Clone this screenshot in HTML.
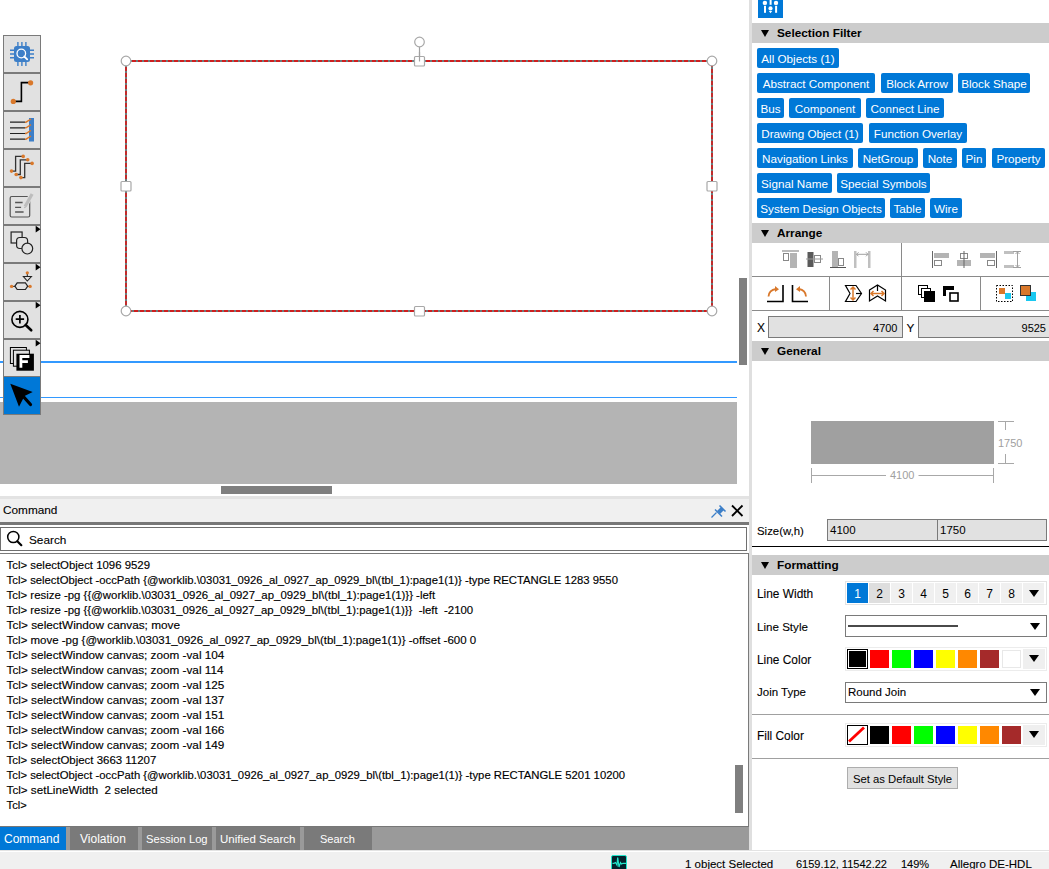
<!DOCTYPE html>
<html><head><meta charset="utf-8">
<style>
*{margin:0;padding:0;box-sizing:border-box}
html,body{width:1049px;height:869px;overflow:hidden;background:#fff;font-family:"Liberation Sans",sans-serif;color:#000}
.a{position:absolute}
#canvas{left:0;top:0;width:737px;height:402px;background:#fff}
#cgrey{left:0;top:402px;width:737px;height:82px;background:#b4b4b4}
#hsb{left:0;top:484px;width:737px;height:12px;background:#fff}
#hthumb{left:221px;top:486px;width:111px;height:8px;background:#7f7f7f}
#vsb{left:737px;top:0;width:12px;height:496px;background:#fff}
#vthumb{left:739px;top:278px;width:8px;height:87px;background:#7f7f7f}
#split{left:749px;top:0;width:3px;height:851px;background:#dfdfdf}
.tb{left:3px;width:38px;height:38px;background:#e1e1e1;border:1px solid #7a7a7a}
.tb svg{position:absolute;left:0;top:0}
.log{left:6.6px;-webkit-text-stroke:0.15px #000;font-size:11.35px;line-height:15px;white-space:pre;color:#000}
.tag{position:absolute;height:20px;background:#0078d7;color:#fff;font-size:11.7px;line-height:22px;border-radius:2px;text-align:center;white-space:nowrap}
.sh{left:752px;width:297px;height:20px;background:#cccccc;font-weight:bold;font-size:11.8px;line-height:20px}
.sh i{position:absolute;left:9px;top:7px;width:0;height:0;border-left:4.5px solid transparent;border-right:4.5px solid transparent;border-top:7px solid #000}
.sh span{position:absolute;left:25px;top:0}
.tabt{top:830.5px;font-size:12px;line-height:16px;color:#fff;white-space:nowrap}
.fld{background:#e1e1e1;border:1px solid #7a7a7a;font-size:11.5px;line-height:20px;white-space:nowrap;overflow:hidden}
.lw{top:583px;width:21px;height:20px;font-size:12px;line-height:22px;text-align:center}
.dd{width:0;height:0;border-left:5.5px solid transparent;border-right:5.5px solid transparent;border-top:7.5px solid #000}
.sw{width:19.5px;height:18.5px}
.st{top:856px;font-size:11.5px;line-height:16px;white-space:nowrap;-webkit-text-stroke:0.1px #000}
.lbl{font-size:12px;white-space:nowrap;-webkit-text-stroke:0.1px #000}
</style></head><body>
<!-- canvas -->
<div class="a" id="canvas"></div>
<div class="a" style="left:0;top:361px;width:737px;height:2px;background:#3399ff"></div>
<div class="a" style="left:0;top:397px;width:737px;height:1px;background:#3399ff"></div>

<svg class="a" style="left:0;top:0" width="737" height="402">
 <g fill="none">
  <rect x="126" y="61" width="586" height="250" stroke="#203838" stroke-width="1.3"/>
  <rect x="126" y="61" width="586" height="250" stroke="#ee0000" stroke-width="1.3" stroke-dasharray="4 2"/>
  <path d="M419.5 47V61" stroke="#a0a0a0" stroke-width="1.2"/>
 </g>
 <g fill="#fff" stroke="#a8a8a8" stroke-width="1.2">
  <circle cx="419.5" cy="42" r="4.8"/>
  <circle cx="126" cy="61" r="4.8"/>
  <circle cx="712" cy="61" r="4.8"/>
  <circle cx="126" cy="311" r="4.8"/>
  <circle cx="712" cy="311" r="4.8"/>
  <rect x="414.5" y="56.5" width="10" height="9.5" rx="1"/>
  <rect x="414.5" y="306.5" width="10" height="9.5" rx="1"/>
  <rect x="121" y="181.5" width="10" height="9.5" rx="1"/>
  <rect x="707" y="181.5" width="10" height="9.5" rx="1"/>
 </g>
 <path d="M419.5 52V61.5" stroke="#a0a0a0" stroke-width="1.2"/>
</svg>
<div class="a" id="cgrey"></div>
<div class="a" id="hsb"></div>
<div class="a" id="hthumb"></div>
<div class="a" id="vsb"></div>
<div class="a" id="vthumb"></div>
<div class="a" id="split"></div>
<!-- toolbar -->
<div class="a" style="left:3px;top:35px;width:38px;height:380px;background:#e1e1e1;border:1px solid #7a7a7a"></div>
<svg class="a" style="left:3px;top:35px" width="40" height="381" viewBox="0 0 40 381">
 <g fill="#7a7a7a">
  <rect x="0" y="37" width="38" height="2"/>
  <rect x="0" y="75" width="38" height="2"/>
  <rect x="0" y="113" width="38" height="2"/>
  <rect x="0" y="151" width="38" height="2"/>
  <rect x="0" y="189" width="38" height="2"/>
  <rect x="0" y="227" width="38" height="2"/>
  <rect x="0" y="265" width="38" height="2"/>
  <rect x="0" y="303" width="38" height="2"/>
  <rect x="0" y="341" width="38" height="2"/>
 </g>
 <!-- 1 chip -->
 <g transform="translate(0,0)">
  <rect x="11" y="11" width="16" height="16" rx="2.5" fill="#3d7fc8"/>
  <g stroke="#3d7fc8" stroke-width="1.4">
   <path d="M14.9 7V11M18.9 7V11M22.9 7V11M14.9 27V31M18.9 27V31M22.9 27V31M7 15.2H11M7 19H11M7 22.7H11M27 15.2H31M27 19H31M27 22.7H31"/>
  </g>
  <circle cx="18.3" cy="18.5" r="4.3" fill="none" stroke="#fff" stroke-width="1.3"/>
  <path d="M21.3 21.5L24.2 24.4" stroke="#fff" stroke-width="1.8" stroke-linecap="round"/>
 </g>
 <!-- 2 wire -->
 <g transform="translate(0,37.3)">
  <path d="M10.3 29.1H18.4V10.3H27.6" stroke="#000" stroke-width="1.6" fill="none"/>
  <circle cx="10.3" cy="29.1" r="2.6" fill="#d9782b"/>
  <circle cx="27.6" cy="10.5" r="2.6" fill="#d9782b"/>
 </g>
 <!-- 3 bus -->
 <g transform="translate(0,76)">
  <rect x="26" y="7" width="5" height="23.5" fill="#3d7fc8"/>
  <path d="M7 11.2H22M7 16.8H22M7 22.5H22M7 28.2H22" stroke="#222" stroke-width="1.2"/>
  <path d="M22 11.2H23L28 8M22 16.8H23L28 13.6M22 22.5H23L28 19.3M22 28.2H23L28 25" stroke="#d9782b" stroke-width="1.4" fill="none"/>
 </g>
 <!-- 4 multi wire -->
 <g transform="translate(3,113)">
  <g stroke="#333" stroke-width="1.3" fill="none">
   <path d="M5.5 23.1H9.6V8.4H17.2"/>
   <path d="M10.2 26.5H14.3V11.8H21.7"/>
   <path d="M14.9 29.6H18.7V15.4H26.1"/>
  </g>
  <g fill="#d9782b">
   <circle cx="5.5" cy="23.1" r="1.8"/><circle cx="17.2" cy="8.4" r="1.8"/>
   <circle cx="10.2" cy="26.5" r="1.8"/><circle cx="21.7" cy="11.8" r="1.8"/>
   <circle cx="14.9" cy="29.6" r="1.8"/><circle cx="26.1" cy="15.4" r="1.8"/>
  </g>
 </g>
 <!-- 5 note -->
 <g transform="translate(2.6,151)">
  <rect x="4.6" y="10.5" width="19.5" height="20.5" rx="1.5" fill="none" stroke="#555" stroke-width="1.2"/>
  <path d="M9.5 16.5H17M9.5 21.3H15.5M9.5 26H18" stroke="#555" stroke-width="1.3"/>
  <path d="M26.5 8L18.8 21" stroke="#e1e1e1" stroke-width="5"/>
  <path d="M26.5 8L19.5 20.5" stroke="#bdbdbd" stroke-width="3.2"/>
  <path d="M18.5 22.3L19.3 20.5 20.3 21.3Z" fill="#999"/>
 </g>
 <!-- 6 shapes -->
 <path transform="translate(0,189)" d="M32.7 1.8L37.5 5.2 32.7 8.5Z" fill="#000"/>
 <g transform="translate(2.9,190)">
  <rect x="5.2" y="7" width="11" height="11" fill="none" stroke="#222" stroke-width="1.2"/>
  <rect x="10.7" y="12.5" width="11" height="11" rx="3.2" fill="#e1e1e1" stroke="#222" stroke-width="1.2"/>
  <circle cx="21.4" cy="23.6" r="5.4" fill="#e1e1e1" stroke="#222" stroke-width="1.2"/>
 </g>
 <!-- 7 symbol -->
 <path transform="translate(0,227)" d="M32.7 1.8L37.5 5.2 32.7 8.5Z" fill="#000"/>
 <g transform="translate(2.9,228)">
  <path d="M21.4 9.8V13.5" stroke="#222" stroke-width="1"/>
  <path d="M17.5 13.5H25.5L21.4 18Z" fill="none" stroke="#222" stroke-width="1.1"/>
  <path d="M5.7 23.4H9M21.7 23.4H24.2" stroke="#222" stroke-width="1"/>
  <path d="M9 23.2L11.3 19.8H19.5L21.8 23.2 19.5 26.5H11.3Z" fill="none" stroke="#222" stroke-width="1.2"/>
  <circle cx="21.4" cy="9.8" r="1.6" fill="#d9782b"/>
  <circle cx="5.7" cy="23.4" r="1.7" fill="#d9782b"/>
  <circle cx="24.2" cy="23.4" r="1.7" fill="#d9782b"/>
 </g>
 <!-- 8 zoom -->
 <path transform="translate(0,265)" d="M32.7 1.8L37.5 5.2 32.7 8.5Z" fill="#000"/>
 <g transform="translate(2.9,266)">
  <circle cx="14" cy="18.4" r="8" fill="none" stroke="#000" stroke-width="1.6"/>
  <path d="M9.8 18.2H18.2M14 14V22.4" stroke="#000" stroke-width="1.7"/>
  <path d="M19.8 24L25.3 29.3" stroke="#000" stroke-width="2.6" stroke-linecap="round"/>
 </g>
 <!-- 9 pages F -->
 <path transform="translate(0,303)" d="M32.7 1.8L37.5 5.2 32.7 8.5Z" fill="#000"/>
 <g transform="translate(2.9,304)">
  <rect x="4.5" y="8.5" width="16" height="16" fill="#e1e1e1" stroke="#000" stroke-width="1"/>
  <rect x="7.5" y="11.2" width="16" height="16" fill="#e1e1e1" stroke="#000" stroke-width="1"/>
  <rect x="10.5" y="14.7" width="17.5" height="17" fill="#000"/>
  <path d="M15 28.7V17.5H23.5M15 22.6H22" stroke="#fff" stroke-width="2.8" fill="none"/>
 </g>
</svg>
<div class="a" style="left:3px;top:376px;width:38px;height:39px;background:#0078d7;border:1px solid #7a7a7a;border-top:1px solid #7a7a7a"></div>
<svg class="a" style="left:3px;top:376px" width="38" height="39">
 <path d="M7.3 7.7L29.7 16 21.5 20 16 30.7Z" fill="#000"/>
 <path d="M19 19L27.5 28.5" stroke="#000" stroke-width="3.2" stroke-linecap="round"/>
</svg>



<!-- command header -->
<div class="a" style="left:0;top:496px;width:749px;height:3px;background:#e3e3e3"></div>
<div class="a" style="left:0;top:499px;width:749px;height:23px;background:#f0f0f0"></div>
<div class="a lbl" style="left:3px;top:503px;font-size:11.8px">Command</div>
<div class="a" style="left:0;top:522px;width:749px;height:3px;background:#777"></div>
<div class="a" style="left:0;top:525px;width:749px;height:326px;background:#fff"></div>
<div class="a" style="left:0;top:527px;width:747px;height:24px;border:1px solid #6f6f6f;background:#fff"></div>
<div class="a lbl" style="left:29px;top:533px;font-size:11.8px">Search</div>
<svg class="a" style="left:0;top:525px" width="30" height="26"><circle cx="13.3" cy="12" r="5.6" fill="none" stroke="#000" stroke-width="1.5"/><path d="M17.3 16.2L21.3 20.2" stroke="#000" stroke-width="2.2" stroke-linecap="round"/></svg>
<svg class="a" style="left:705px;top:500px" width="44" height="22">
 <path d="M6.5 17.5L11.5 12.5" stroke="#3d7fc8" stroke-width="1.2"/>
 <path d="M10 9.5L17 16.5M14.5 5.5L20.5 11.5" stroke="#3d7fc8" stroke-width="1.5"/>
 <path d="M12 11L16 7 19 10 15 14Z" fill="#3d7fc8"/>
 <path d="M27 5.5L37.5 16M37.5 5.5L27 16" stroke="#000" stroke-width="1.8"/>
</svg>
<div class="a" style="left:0;top:553px;width:749px;height:273px;border:1px solid #7a7a7a;border-bottom:none;border-left:none;background:#fff"></div>

<div class="a log" style="top:557.5px;font-size:11.40px">Tcl&gt; selectObject 1096 9529</div>
<div class="a log" style="top:572.5px;font-size:11.30px">Tcl&gt; selectObject -occPath {@worklib.\03031_0926_al_0927_ap_0929_bl\(tbl_1):page1(1)} -type RECTANGLE 1283 9550</div>
<div class="a log" style="top:587.5px;font-size:11.41px">Tcl&gt; resize -pg {{@worklib.\03031_0926_al_0927_ap_0929_bl\(tbl_1):page1(1)}} -left</div>
<div class="a log" style="top:602.5px;font-size:11.40px">Tcl&gt; resize -pg {{@worklib.\03031_0926_al_0927_ap_0929_bl\(tbl_1):page1(1)}}  -left  -2100</div>
<div class="a log" style="top:617.5px;font-size:11.80px">Tcl&gt; selectWindow canvas; move</div>
<div class="a log" style="top:632.5px;font-size:11.49px">Tcl&gt; move -pg {@worklib.\03031_0926_al_0927_ap_0929_bl\(tbl_1):page1(1)} -offset -600 0</div>
<div class="a log" style="top:646.7px;font-size:11.76px">Tcl&gt; selectWindow canvas; zoom -val 104</div>
<div class="a log" style="top:661.7px;font-size:11.76px">Tcl&gt; selectWindow canvas; zoom -val 114</div>
<div class="a log" style="top:676.7px;font-size:11.76px">Tcl&gt; selectWindow canvas; zoom -val 125</div>
<div class="a log" style="top:691.7px;font-size:11.76px">Tcl&gt; selectWindow canvas; zoom -val 137</div>
<div class="a log" style="top:706.7px;font-size:11.76px">Tcl&gt; selectWindow canvas; zoom -val 151</div>
<div class="a log" style="top:721.7px;font-size:11.76px">Tcl&gt; selectWindow canvas; zoom -val 166</div>
<div class="a log" style="top:736.7px;font-size:11.76px">Tcl&gt; selectWindow canvas; zoom -val 149</div>
<div class="a log" style="top:752.5px;font-size:11.46px">Tcl&gt; selectObject 3663 11207</div>
<div class="a log" style="top:767.5px;font-size:11.32px">Tcl&gt; selectObject -occPath {@worklib.\03031_0926_al_0927_ap_0929_bl\(tbl_1):page1(1)} -type RECTANGLE 5201 10200</div>
<div class="a log" style="top:781.7px;font-size:11.65px">Tcl&gt; setLineWidth  2 selected</div>
<div class="a log" style="top:797.5px;font-size:11.20px">Tcl&gt;</div>
<div class="a" style="left:735px;top:765px;width:8px;height:48px;background:#7f7f7f"></div>

<!-- tab bar -->
<div class="a" style="left:0;top:826px;width:749px;height:24px;background:#9a9a9a"></div>
<div class="a" style="left:0;top:826px;width:749px;height:1px;background:#777"></div>


<div class="a" style="left:0;top:827px;width:66px;height:23px;background:#0078d7"></div>
<div class="a" style="left:70px;top:827px;width:68px;height:23px;background:#7a7a7a"></div>
<div class="a" style="left:142px;top:827px;width:70px;height:23px;background:#7a7a7a"></div>
<div class="a" style="left:216px;top:827px;width:84px;height:23px;background:#7a7a7a"></div>
<div class="a" style="left:304px;top:827px;width:68px;height:23px;background:#7a7a7a"></div>
<div class="a tabt" style="left:4px">Command</div>
<div class="a tabt" style="left:80px">Violation</div>
<div class="a tabt" style="left:146px;font-size:11.2px;top:831px">Session Log</div>
<div class="a tabt" style="left:220px;font-size:11.5px;top:831px">Unified Search</div>
<div class="a tabt" style="left:320px;font-size:11px;top:830.5px">Search</div>

<!-- status bar -->
<div class="a" style="left:0;top:850px;width:1049px;height:1px;background:#e3e3e3"></div>
<div class="a" style="left:0;top:852px;width:1049px;height:17px;background:#f0f0f0"></div>

<!-- right panel -->
<div class="a" style="left:758px;top:0;width:25px;height:18px;background:#0078d7"></div>
<svg class="a" style="left:758px;top:0" width="25" height="18"><g fill="#fff"><circle cx="6.9" cy="2.9" r="2.2"/><rect x="6" y="5.8" width="2" height="7"/><rect x="11.6" y="0" width="2" height="4.8"/><circle cx="12.5" cy="8.4" r="2.1"/><path d="M10.8 11H14.2L12.5 13.2Z"/><circle cx="18" cy="2.9" r="2.2"/><rect x="17.1" y="5.8" width="2" height="7"/></g></svg>
<div class="a sh" style="top:23px"><i></i><span>Selection Filter</span></div>
<div class="a sh" style="top:223px"><i></i><span>Arrange</span></div>
<div class="a sh" style="top:341px"><i></i><span>General</span></div>
<div class="a sh" style="top:555px"><i></i><span>Formatting</span></div>

<div class="tag" style="left:757px;top:48px;width:82px">All Objects (1)</div>
<div class="tag" style="left:757px;top:73px;width:118px">Abstract Component</div>
<div class="tag" style="left:881px;top:73px;width:72px">Block Arrow</div>
<div class="tag" style="left:958px;top:73px;width:72px">Block Shape</div>
<div class="tag" style="left:757px;top:98px;width:27px">Bus</div>
<div class="tag" style="left:789px;top:98px;width:72px">Component</div>
<div class="tag" style="left:866px;top:98px;width:78px">Connect Line</div>
<div class="tag" style="left:757px;top:123px;width:106px">Drawing Object (1)</div>
<div class="tag" style="left:869px;top:123px;width:98px">Function Overlay</div>
<div class="tag" style="left:757px;top:148px;width:96px">Navigation Links</div>
<div class="tag" style="left:858px;top:148px;width:60px">NetGroup</div>
<div class="tag" style="left:923px;top:148px;width:34px">Note</div>
<div class="tag" style="left:962px;top:148px;width:24px">Pin</div>
<div class="tag" style="left:992px;top:148px;width:53px">Property</div>
<div class="tag" style="left:757px;top:173px;width:75px">Signal Name</div>
<div class="tag" style="left:837px;top:173px;width:93px">Special Symbols</div>
<div class="tag" style="left:757px;top:198px;width:128px">System Design Objects</div>
<div class="tag" style="left:890px;top:198px;width:35px">Table</div>
<div class="tag" style="left:930px;top:198px;width:32px">Wire</div>
<!-- arrange -->
<div class="a" style="left:752px;top:276px;width:297px;height:1px;background:#8a8a8a"></div>
<div class="a" style="left:752px;top:310px;width:297px;height:1px;background:#8a8a8a"></div>
<div class="a" style="left:901px;top:243px;width:1px;height:67px;background:#8a8a8a"></div>
<div class="a" style="left:829px;top:277px;width:1px;height:33px;background:#8a8a8a"></div>
<div class="a" style="left:980px;top:277px;width:1px;height:33px;background:#8a8a8a"></div>
<svg class="a" style="left:752px;top:243px" width="297" height="67" viewBox="752 243 297 67">
 <!-- align top -->
 <rect x="782" y="250.5" width="17" height="1" fill="#777"/>
 <rect x="783.5" y="253.5" width="5" height="7" fill="none" stroke="#888" stroke-width="1"/>
 <rect x="790" y="253" width="7" height="15" fill="#b4b4b4"/>
 <!-- align middle -->
 <rect x="807.5" y="252" width="6" height="15" fill="#5a5a5a"/>
 <rect x="814.5" y="255.5" width="6" height="7" fill="none" stroke="#888" stroke-width="1"/>
 <rect x="806" y="258.5" width="17" height="1" fill="#999"/>
 <!-- align bottom -->
 <rect x="832" y="251" width="6" height="16" fill="#b4b4b4"/>
 <rect x="838.5" y="258.5" width="5" height="7" fill="none" stroke="#888" stroke-width="1"/>
 <rect x="830" y="267" width="16" height="1" fill="#555"/>
 <!-- distribute h -->
 <rect x="854" y="251" width="2.5" height="17" fill="#c0c0c0"/>
 <rect x="868" y="251" width="2.5" height="17" fill="#c0c0c0"/>
 <path d="M856.5 254.3H868M858.5 252.3l-2 2 2 2M866 252.3l2 2-2 2" stroke="#a0a0a0" fill="none" stroke-width="1"/>
 <!-- align left -->
 <rect x="932" y="251" width="1" height="17" fill="#666"/>
 <rect x="934" y="253" width="15" height="5" fill="#b4b4b4"/>
 <rect x="934.5" y="260.5" width="7" height="5" fill="none" stroke="#888" stroke-width="1"/>
 <!-- align center -->
 <rect x="957" y="260" width="14" height="6" fill="#b4b4b4"/>
 <rect x="960.5" y="253.5" width="7" height="5" fill="none" stroke="#888" stroke-width="1"/>
 <rect x="963.5" y="251" width="1" height="17" fill="#666"/>
 <!-- align right -->
 <rect x="980" y="253" width="15" height="5" fill="#b4b4b4"/>
 <rect x="987.5" y="260.5" width="7" height="5" fill="none" stroke="#888" stroke-width="1"/>
 <rect x="996" y="251" width="1" height="17" fill="#666"/>
 <!-- distribute v -->
 <rect x="1004" y="251" width="10" height="3" fill="#c0c0c0"/>
 <rect x="1004" y="265" width="10" height="3" fill="#c0c0c0"/>
 <path d="M1013 251.5H1021M1013 267.5H1021M1017.5 252V267M1015.5 254l2-2 2 2M1015.5 265l2 2 2-2" stroke="#a0a0a0" fill="none" stroke-width="1"/>
 <!-- row2: rotate -->
 <path d="M783 285V301.5H767" stroke="#000" stroke-width="1.6" fill="none"/>
 <path d="M768.5 296.5Q769 290 776 289" stroke="#d9782b" stroke-width="1.8" fill="none"/>
 <path d="M775 286L779 289.2 775 292Z" fill="#d9782b"/>
 <path d="M792.5 285V301.5H808" stroke="#000" stroke-width="1.6" fill="none"/>
 <path d="M806 296.5Q805.5 290 799 289" stroke="#d9782b" stroke-width="1.8" fill="none"/>
 <path d="M800 286L796 289.2 800 292Z" fill="#d9782b"/>
 <!-- flip -->
 <path d="M845.5 285.5H856L861.5 293.5 856 301.5H845.5L850 293.5Z" stroke="#000" stroke-width="1.2" fill="#fff"/>
 <path d="M853 287V300M850.5 289.5l2.5-2.5 2.5 2.5M850.5 297.5l2.5 2.5 2.5-2.5" stroke="#d9782b" stroke-width="1.5" fill="none"/>
 <path d="M856 293.5H861" stroke="#000" stroke-width="1.2"/>
 <path d="M869.5 290L877.5 285 885.5 290V301L877.5 296 869.5 301Z" stroke="#000" stroke-width="1.2" fill="#fff"/>
 <path d="M871 293.5H884M873.5 291l-2.5 2.5 2.5 2.5M881.5 291l2.5 2.5-2.5 2.5" stroke="#d9782b" stroke-width="1.5" fill="none"/>
 <path d="M877.5 285V291" stroke="#000" stroke-width="1.2"/>
 <!-- bring front -->
 <rect x="918.5" y="285.5" width="9" height="9" fill="#fff" stroke="#000" stroke-width="1"/>
 <rect x="921.5" y="288.5" width="9" height="9" fill="#fff" stroke="#000" stroke-width="1"/>
 <rect x="924" y="291" width="11" height="11" fill="#000"/>
 <!-- send back -->
 <path d="M943 286H954V290H946V296H943Z" fill="#000"/>
 <rect x="950" y="293" width="8" height="8" fill="#fff" stroke="#000" stroke-width="1.6"/>
 <!-- group -->
 <rect x="996.5" y="285.5" width="16" height="16" fill="none" stroke="#000" stroke-width="1" stroke-dasharray="1.5 1.5"/>
 <rect x="999" y="288" width="6" height="6" fill="#d9782b"/>
 <rect x="1005" y="293" width="6" height="6" fill="#19c8f0"/>
 <!-- ungroup -->
 <rect x="1026" y="292" width="10" height="9" fill="#19c8f0"/>
 <rect x="1020.5" y="285.5" width="10" height="10" fill="#d9782b" stroke="#333" stroke-width="1"/>
</svg>
<div class="a lbl" style="left:757px;top:321.2px;font-size:12px">X</div>
<div class="a fld" style="left:768px;top:316px;width:135px;height:22px;text-align:right;padding-right:4.5px;font-size:11px;line-height:23px">4700</div>
<div class="a lbl" style="left:906.5px;top:321.2px;font-size:11.8px">Y</div>
<div class="a fld" style="left:918px;top:316px;width:140px;height:22px;text-align:right;padding-right:11px;font-size:11px;line-height:23px">9525</div>

<!-- general -->
<div class="a" style="left:811px;top:421px;width:183px;height:43px;background:#a0a0a0"></div>
<svg class="a" style="left:752px;top:361px" width="297" height="190" viewBox="752 361 297 190">
 <path d="M998 421.5H1014M998 463.5H1014M1005.5 421V430M1005.5 454V464" stroke="#a8a8a8" stroke-width="1" fill="none"/>
 <path d="M811.5 468V483M993.5 468V483M811.5 475.5H886M918.5 475.5H993" stroke="#a8a8a8" stroke-width="1" fill="none"/>
</svg>
<div class="a" style="left:998px;top:436.5px;font-size:11px;color:#a0a0a0">1750</div>
<div class="a" style="left:890px;top:469px;font-size:11px;color:#a0a0a0">4100</div>
<div class="a lbl" style="left:757px;top:524.5px;font-size:11.4px">Size(w,h)</div>
<div class="a fld" style="left:827px;top:519px;width:111px;height:22px;padding-left:2px;line-height:21px">4100</div>
<div class="a fld" style="left:937px;top:519px;width:110px;height:22px;padding-left:2px;line-height:21px">1750</div>
<div class="a" style="left:752px;top:546px;width:297px;height:1px;background:#000"></div>

<!-- formatting -->
<div class="a lbl" style="left:757px;top:587px;font-size:11.9px">Line Width</div>
<div class="a lbl" style="left:757px;top:619.5px;font-size:11.6px">Line Style</div>
<div class="a lbl" style="left:757px;top:653px;font-size:11.9px">Line Color</div>
<div class="a lbl" style="left:757px;top:686px;font-size:11.5px">Join Type</div>
<div class="a lbl" style="left:757px;top:729px;font-size:11.9px">Fill Color</div>
<div class="a" style="left:845px;top:581px;width:202px;height:24px;background:#fff;border:1px solid #e3e3e3"></div>
<div class="a lw" style="left:847px;background:#0078d7;color:#fff">1</div>
<div class="a lw" style="left:869px;background:#dedede;color:#000">2</div>
<div class="a lw" style="left:891px;background:#f0f0f0;color:#000">3</div>
<div class="a lw" style="left:913px;background:#f0f0f0;color:#000">4</div>
<div class="a lw" style="left:935px;background:#f0f0f0;color:#000">5</div>
<div class="a lw" style="left:957px;background:#f0f0f0;color:#000">6</div>
<div class="a lw" style="left:979px;background:#f0f0f0;color:#000">7</div>
<div class="a lw" style="left:1001px;background:#f0f0f0;color:#000">8</div>
<div class="a lw" style="left:1023px;background:#f0f0f0;color:#000"></div>
<div class="a dd" style="left:1028.5px;top:590px"></div>
<div class="a" style="left:845px;top:615px;width:202px;height:22px;border:1px solid #7a7a7a;background:#fff"></div>
<div class="a" style="left:848px;top:624.5px;width:110px;height:2.5px;background:#4a4a4a"></div>
<div class="a dd" style="left:1029.5px;top:622.5px"></div>
<div class="a" style="left:845px;top:647px;width:202px;height:24px;background:#fff;border:1px solid #ececec"></div>
<div class="a" style="left:847px;top:649px;width:21px;height:20px;background:#000;border:1.5px solid #000;box-shadow:inset 0 0 0 1px #fff"></div>
<div class="a" style="left:870px;top:650px;width:19px;height:18px;background:#ff0000"></div>
<div class="a" style="left:892px;top:650px;width:19px;height:18px;background:#00ff00"></div>
<div class="a" style="left:914px;top:650px;width:19px;height:18px;background:#0000ff"></div>
<div class="a" style="left:936px;top:650px;width:19px;height:18px;background:#ffff00"></div>
<div class="a" style="left:958px;top:650px;width:19px;height:18px;background:#ff8800"></div>
<div class="a" style="left:980px;top:650px;width:19px;height:18px;background:#a52a2a"></div>
<div class="a" style="left:1002px;top:650px;width:19px;height:18px;background:#ffffff;box-shadow:inset 0 0 0 1px #e8e8e8"></div>
<div class="a" style="left:1023px;top:649px;width:22px;height:20px;background:#efefef"></div>
<div class="a dd" style="left:1028.5px;top:655.0px"></div>
<div class="a" style="left:845px;top:682px;width:202px;height:21px;border:1px solid #7a7a7a;background:#fff"></div>
<div class="a lbl" style="left:848px;top:686px;font-size:11.5px">Round Join</div>
<div class="a dd" style="left:1029.5px;top:689px"></div>
<div class="a" style="left:752px;top:714px;width:297px;height:1px;background:#a0a0a0"></div>
<div class="a" style="left:845px;top:723px;width:202px;height:24px;background:#fff;border:1px solid #ececec"></div>
<div class="a" style="left:847px;top:725px;width:21px;height:20px;background:#fff;border:1.5px solid #000;overflow:hidden"><svg width="18" height="17" style="position:absolute;left:0;top:0"><path d="M1 15.5L16 1.5" stroke="#f00" stroke-width="2.8"/></svg></div>
<div class="a" style="left:870px;top:726px;width:19px;height:18px;background:#000000"></div>
<div class="a" style="left:892px;top:726px;width:19px;height:18px;background:#ff0000"></div>
<div class="a" style="left:914px;top:726px;width:19px;height:18px;background:#00ff00"></div>
<div class="a" style="left:936px;top:726px;width:19px;height:18px;background:#0000ff"></div>
<div class="a" style="left:958px;top:726px;width:19px;height:18px;background:#ffff00"></div>
<div class="a" style="left:980px;top:726px;width:19px;height:18px;background:#ff8800"></div>
<div class="a" style="left:1002px;top:726px;width:19px;height:18px;background:#a52a2a"></div>
<div class="a" style="left:1023px;top:725px;width:22px;height:20px;background:#efefef"></div>
<div class="a dd" style="left:1028.5px;top:731.0px"></div>
<div class="a" style="left:752px;top:758px;width:297px;height:1px;background:#a0a0a0"></div>
<div class="a" style="left:847px;top:767px;width:111px;height:22px;background:#e1e1e1;border:1px solid #adadad;font-size:11.3px;line-height:22px;text-align:center;white-space:nowrap">Set as Default Style</div>

<!-- status -->
<div class="a st" style="left:685px">1 object Selected</div>
<div class="a st" style="left:796px;font-size:11px">6159.12, 11542.22</div>
<div class="a st" style="left:901px;font-size:11px">149%</div>
<div class="a st" style="left:950px">Allegro DE-HDL</div>
<div class="a" style="left:611px;top:855px;width:16px;height:16px;background:#03222c;border:1.5px solid #22e6cc;border-radius:2px"></div>
<svg class="a" style="left:611px;top:855px" width="16" height="14"><path d="M1.5 8.3H3L4.5 7.5 6 10 6.7 2.5 8 12 9.5 7.5 10.5 9 12 8.3H15" stroke="#22e6cc" stroke-width="1.2" fill="none"/></svg>

</body></html>
